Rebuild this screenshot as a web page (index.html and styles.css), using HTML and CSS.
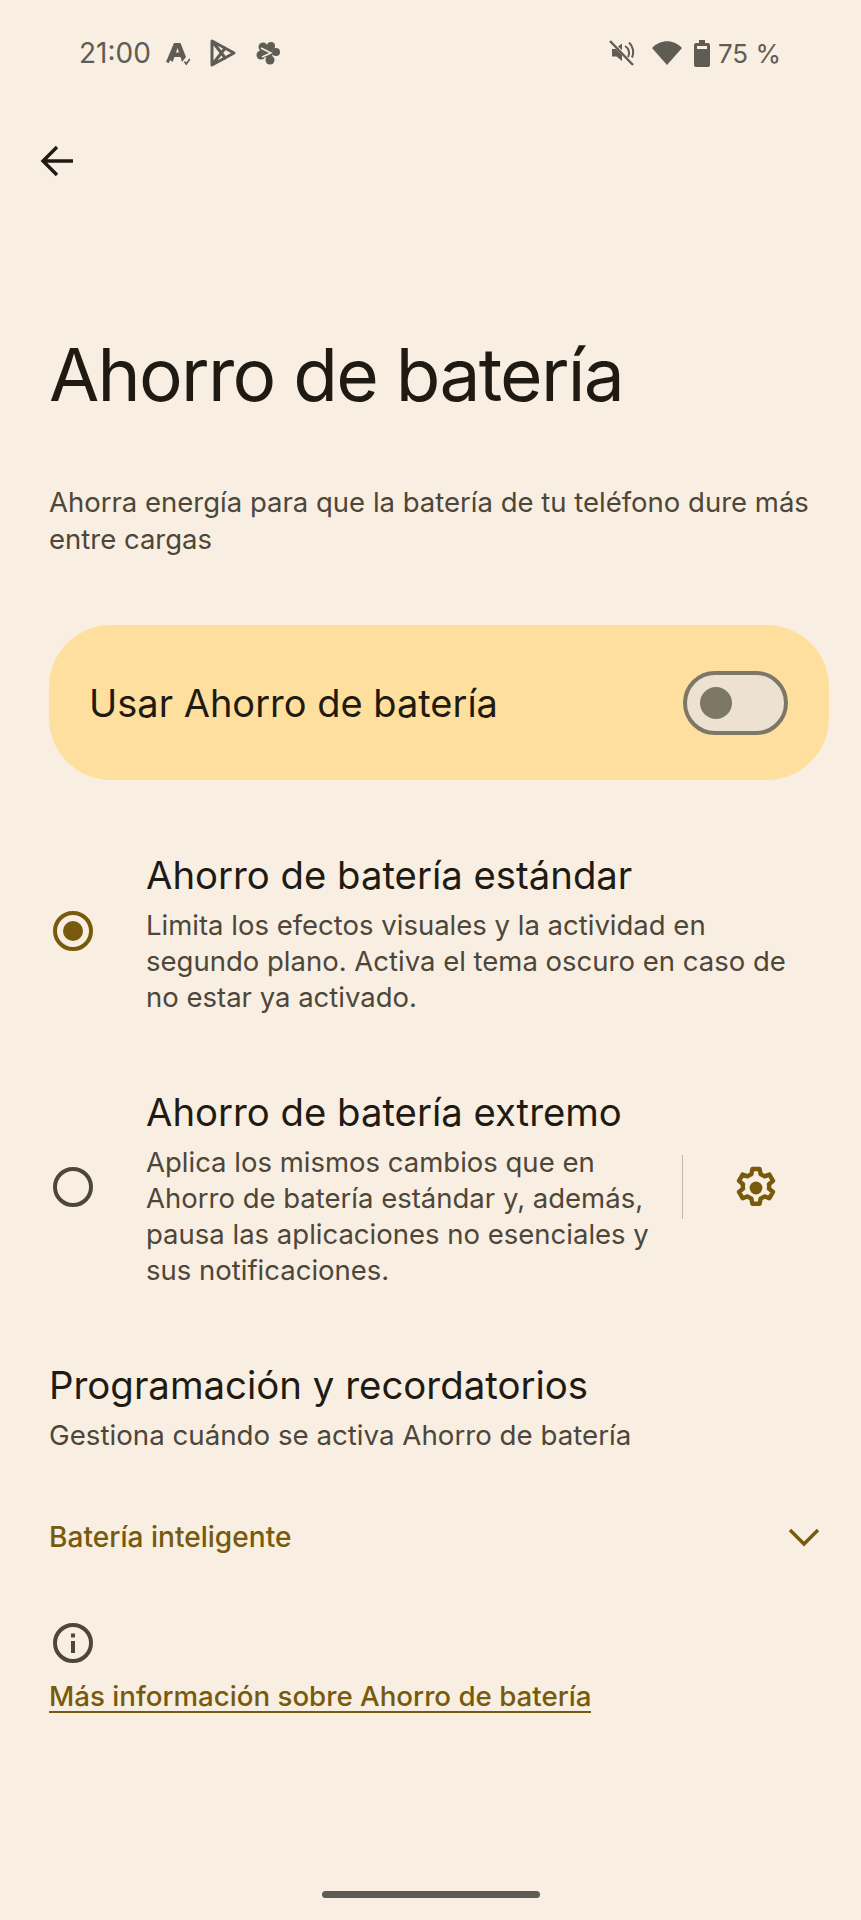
FILE: index.html
```html
<!DOCTYPE html>
<html lang="es">
<head>
  <meta charset="UTF-8" />
  <meta name="viewport" content="width=device-width, initial-scale=1" />
  <title>Ahorro de batería</title>
  <link rel="stylesheet" href="styles.css">
</head>
<body>
  <div class="status-bar">
    <span class="clock">21:00</span>
    <svg class="st-a" viewBox="0 0 26 26"><path d="M1 22 L9 3 H15.500 L21 17 L17 22 L15.500 17 H9.500 L7.500 22 L5 20 L4 23 Z M11 12.500 H14 L12.500 8 Z" fill="#5f5c54" fill-rule="evenodd"/><path d="M19.500 21.500 l1.800 2.500 l3.500 -5" fill="none" stroke="#5f5c54" stroke-width="1.600"/></svg>
    <svg class="st-play" viewBox="0 0 28 30"><path d="M3 3 L25 15 L3 27 Z M3 3 L17 21 M3 27 L17 9" fill="none" stroke="#5f5c54" stroke-width="3" stroke-linejoin="round"/></svg>
    <svg class="st-pin" viewBox="0 0 26 26"><g fill="#5f5c54"><circle cx="8" cy="7" r="4.500"/><circle cx="16" cy="6" r="4"/><circle cx="6" cy="15" r="4.500"/><circle cx="15" cy="20" r="4.500"/><circle cx="21" cy="12" r="4"/><circle cx="13" cy="13" r="5"/></g><path d="M6 8 L16 13 L7 17" fill="none" stroke="#f8eee2" stroke-width="1.500"/></svg>
    <span class="spacer"></span>
    <svg class="st-mute" viewBox="0 0 26 26"><path d="M3 9 H7 L13 15 V21 L7.500 16.500 H3 Z M9 6.500 L13 3.500 V10 Z" fill="#5f5c54"/><path d="M16 6 a8 8 0 0 1 3 11 M20 2.500 a13 13 0 0 1 3 15" fill="none" stroke="#5f5c54" stroke-width="2"/><path d="M1 1 L24 25" stroke="#5f5c54" stroke-width="2.400"/></svg>
    <svg class="st-wifi" viewBox="0 0 30 26"><path d="M0 8 C8 -1 22 -1 30 8 L15 25 Z" fill="#5f5c54"/></svg>
    <svg class="st-batt" viewBox="0 0 16 27"><path d="M5 0 H11 V3 H14 Q16 3 16 5 V25 Q16 27 14 27 H2 Q0 27 0 25 V5 Q0 3 2 3 H5 Z M3 6 V9 H13 V6 Z" fill="#5f5c54" fill-rule="evenodd"/></svg>
    <span class="pct">75 %</span>
  </div>

  <div class="top-bar">
    <svg class="back" viewBox="0 0 34 32"><path d="M33 16 H3 M17 2 L3 16 L17 30" fill="none" stroke="#1f1b13" stroke-width="3.400"/></svg>
  </div>

  <main class="content">
    <h1 class="title">Ahorro de batería</h1>
    <p class="desc">Ahorra energía para que la batería de tu teléfono dure más<br>entre cargas</p>

    <div class="main-switch">
      <span>Usar Ahorro de batería</span>
      <div class="toggle"><div class="thumb"></div></div>
    </div>

    <div class="option first">
      <div class="radio checked"><div class="dot"></div></div>
      <div class="option-text">
        <div class="option-title">Ahorro de batería estándar</div>
        <div class="option-sub">Limita los efectos visuales y la actividad en<br>segundo plano. Activa el tema oscuro en caso de<br>no estar ya activado.</div>
      </div>
    </div>

    <div class="option second">
      <div class="radio"></div>
      <div class="option-text">
        <div class="option-title">Ahorro de batería extremo</div>
        <div class="option-sub">Aplica los mismos cambios que en<br>Ahorro de batería estándar y, además,<br>pausa las aplicaciones no esenciales y<br>sus notificaciones.</div>
      </div>
      <div class="divider"></div>
      <svg class="gear" viewBox="0 0 24 24"><path d="M10.200 2.500 h3.600 l.5 2.600 a7.300 7.300 0 0 1 1.900 1.100 l2.500-.9 1.800 3.100 -2 1.700 a7.300 7.300 0 0 1 0 2.200 l2 1.700 -1.800 3.100 -2.500-.9 a7.300 7.300 0 0 1-1.900 1.100 l-.5 2.600 h-3.600 l-.5-2.600 a7.300 7.300 0 0 1-1.900-1.100 l-2.500.9 -1.800-3.100 2-1.700 a7.300 7.300 0 0 1 0-2.200 l-2-1.700 1.800-3.100 2.500.9 a7.300 7.300 0 0 1 1.900-1.100 z" fill="none" stroke="#775a0b" stroke-width="2.200" stroke-linejoin="round"/><circle cx="12" cy="12" r="3.200" fill="#775a0b"/></svg>
    </div>

    <h2 class="section-title">Programación y recordatorios</h2>
    <p class="section-sub">Gestiona cuándo se activa Ahorro de batería</p>

    <div class="expander">
      <span>Batería inteligente</span>
      <svg class="chevron" viewBox="0 0 32 20"><path d="M2 3 L16 17 L30 3" fill="none" stroke="#775a0b" stroke-width="3.400"/></svg>
    </div>

    <svg class="info" viewBox="0 0 40 40"><circle cx="20" cy="20" r="18" fill="none" stroke="#4d4639" stroke-width="4"/><rect x="18" y="18" width="4" height="12" fill="#4d4639"/><rect x="18" y="10.500" width="4" height="4" fill="#4d4639"/></svg>
    <a class="learn" href="#">Más información sobre Ahorro de batería</a>
  </main>

  <div class="home-bar"></div>
</body>
</html>
```

FILE: styles.css
```css
* {
  box-sizing: border-box;
}
html, body {
  height: 1920px;
}
body {
  margin: 0;
  background-color: #f8eee2;
  color: #1f1b13;
  font-family: Inter, "Noto Sans", sans-serif;
  overflow: hidden;
}
h1, h2, p {
  margin: 0;
  font-weight: 400;
}

/* status bar */
.status-bar {
  height: 104px;
  padding: 2px 80px 0 79px;
  display: flex;
  align-items: center;
  color: #5f5c54;
  font-size: 26px;
}
.clock {
  width: 71px;
  font-size: 28px;
}
.spacer {
  flex: 1;
}
.st-a {
  width: 26px;
  height: 26px;
  margin-left: 15px;
}
.st-play {
  width: 28px;
  height: 30px;
  margin-left: 18px;
}
.st-pin {
  width: 26px;
  height: 26px;
  margin-left: 18px;
}
.st-mute {
  width: 26px;
  height: 26px;
}
.st-wifi {
  width: 30px;
  height: 26px;
  margin-left: 17px;
}
.st-batt {
  width: 16px;
  height: 27px;
  margin-left: 12px;
}
.pct {
  margin-left: 8px;
}

.top-bar {
  height: 114px;
  padding-left: 40px;
  display: flex;
  align-items: center;
}
.back {
  width: 34px;
  height: 32px;
}

.content {
  padding: 0 32px 0 49px;
}
.title {
  margin-top: 109px;
  font-size: 73px;
  line-height: 96px;
  letter-spacing: -1.75px;
}
.desc {
  margin-top: 61px;
  font-size: 27.500px;
  line-height: 36.500px;
  color: #4d4639;
}

.main-switch {
  margin-top: 68px;
  height: 155px;
  padding: 0 41px 0 40px;
  border-radius: 62px;
  background-color: #ffdf9e;
  display: flex;
  align-items: center;
  justify-content: space-between;
  font-size: 38px;
}
.toggle {
  width: 105px;
  height: 64px;
  border: 4px solid #7c7767;
  border-radius: 32px;
  background-color: #ede2d1;
  padding: 12px 0 0 13px;
}
.thumb {
  width: 32px;
  height: 32px;
  border-radius: 50%;
  background-color: #7c7767;
}

.option {
  display: flex;
  align-items: center;
}
.option.first {
  margin-top: 73px;
}
.option.second {
  margin-top: 75px;
}
.radio {
  flex: none;
  width: 40px;
  height: 40px;
  margin: 0 53px 5px 4px;
  border: 4px solid #4d4639;
  border-radius: 50%;
  display: flex;
  align-items: center;
  justify-content: center;
}
.radio.checked {
  margin-bottom: 7px;
  border-color: #775a0b;
}
.dot {
  width: 20px;
  height: 20px;
  border-radius: 50%;
  background-color: #775a0b;
}
.option-text {
  flex: 1;
}
.option-title {
  font-size: 38.300px;
  line-height: 44px;
}
.option-sub {
  margin-top: 10px;
  font-size: 27.500px;
  line-height: 36px;
  color: #4d4639;
}
.divider {
  flex: none;
  width: 1px;
  height: 64px;
  margin-bottom: 5px;
  background-color: #c0b7a8;
}
.gear {
  flex: none;
  width: 48px;
  height: 48px;
  margin: 0 49px 3px 49px;
}

.section-title {
  margin-top: 75px;
  font-size: 38.400px;
  line-height: 44px;
}
.section-sub {
  margin-top: 10px;
  font-size: 27.700px;
  line-height: 36px;
  color: #4d4639;
}

.expander {
  margin-top: 54px;
  height: 60px;
  padding-right: 9px;
  display: flex;
  align-items: center;
  justify-content: space-between;
  font-size: 28.100px;
  font-weight: 500;
  color: #775a0b;
}
.chevron {
  width: 32px;
  height: 20px;
}

.info {
  display: block;
  width: 40px;
  height: 40px;
  margin: 56px 0 18px 4px;
}
.learn {
  display: inline-block;
  font-size: 27.700px;
  line-height: 30px;
  font-weight: 500;
  color: #775a0b;
  text-decoration: none;
  border-bottom: 2px solid #775a0b;
}

.home-bar {
  width: 218px;
  height: 7px;
  margin: 178px auto 0;
  border-radius: 4px;
  background-color: #5f5c54;
}
```
